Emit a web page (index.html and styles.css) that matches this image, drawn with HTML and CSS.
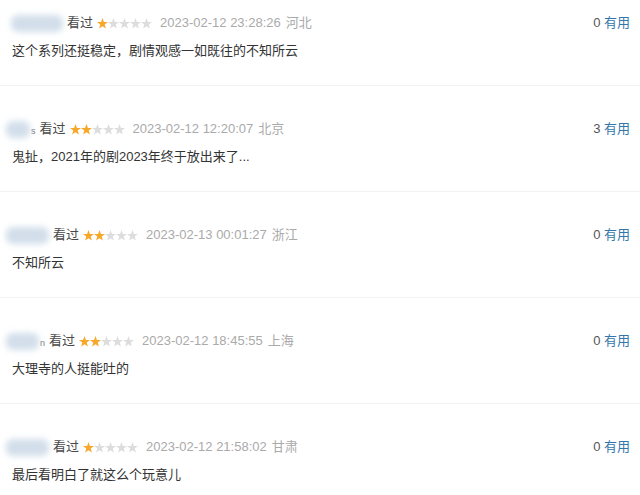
FILE: index.html
```html
<!DOCTYPE html>
<html lang="zh-CN">
<head>
    <meta charset="UTF-8">
    <meta name="viewport" content="width=device-width, initial-scale=1.0">
    <title>短评</title>
    <link rel="stylesheet" href="styles.css">
</head>
<body>
    <svg class="defs" width="0" height="0">
        <defs>
            <symbol id="star" viewBox="0 0 11 11">
                <polygon points="5.5,0 6.9,3.9 11,4 7.7,6.5 8.9,10.6 5.5,8.2 2.1,10.6 3.3,6.5 0,4 4.1,3.9"/>
            </symbol>
        </defs>
    </svg>
    <div class="comments">
        <div class="comment">
            <div class="comment-head">
                <div class="info">
                    <span class="name"><span class="blur blur-1"></span></span>
                    <span class="watched">看过</span>
                    <svg class="stars" viewBox="0 0 56 11">
                        <use href="#star" x="0" width="11" height="11" class="on"/>
                        <use href="#star" x="11" width="11" height="11"/>
                        <use href="#star" x="22" width="11" height="11"/>
                        <use href="#star" x="33" width="11" height="11"/>
                        <use href="#star" x="44" width="11" height="11"/>
                    </svg>
                    <span class="time">2023-02-12 23:28:26</span>
                    <span class="place">河北</span>
                </div>
                <div class="votes">0 <a href="#">有用</a></div>
            </div>
            <p class="comment-text">这个系列还挺稳定，剧情观感一如既往的不知所云</p>
        </div>
        <div class="comment">
            <div class="comment-head">
                <div class="info">
                    <span class="name"><span class="blur blur-2"></span><span class="tail">s</span></span>
                    <span class="watched">看过</span>
                    <svg class="stars" viewBox="0 0 56 11">
                        <use href="#star" x="0" width="11" height="11" class="on"/>
                        <use href="#star" x="11" width="11" height="11" class="on"/>
                        <use href="#star" x="22" width="11" height="11"/>
                        <use href="#star" x="33" width="11" height="11"/>
                        <use href="#star" x="44" width="11" height="11"/>
                    </svg>
                    <span class="time">2023-02-12 12:20:07</span>
                    <span class="place">北京</span>
                </div>
                <div class="votes">3 <a href="#">有用</a></div>
            </div>
            <p class="comment-text">鬼扯，2021年的剧2023年终于放出来了...</p>
        </div>
        <div class="comment">
            <div class="comment-head">
                <div class="info">
                    <span class="name"><span class="blur blur-3"></span></span>
                    <span class="watched">看过</span>
                    <svg class="stars" viewBox="0 0 56 11">
                        <use href="#star" x="0" width="11" height="11" class="on"/>
                        <use href="#star" x="11" width="11" height="11" class="on"/>
                        <use href="#star" x="22" width="11" height="11"/>
                        <use href="#star" x="33" width="11" height="11"/>
                        <use href="#star" x="44" width="11" height="11"/>
                    </svg>
                    <span class="time">2023-02-13 00:01:27</span>
                    <span class="place">浙江</span>
                </div>
                <div class="votes">0 <a href="#">有用</a></div>
            </div>
            <p class="comment-text">不知所云</p>
        </div>
        <div class="comment">
            <div class="comment-head">
                <div class="info">
                    <span class="name"><span class="blur blur-4"></span><span class="tail">n</span></span>
                    <span class="watched">看过</span>
                    <svg class="stars" viewBox="0 0 56 11">
                        <use href="#star" x="0" width="11" height="11" class="on"/>
                        <use href="#star" x="11" width="11" height="11" class="on"/>
                        <use href="#star" x="22" width="11" height="11"/>
                        <use href="#star" x="33" width="11" height="11"/>
                        <use href="#star" x="44" width="11" height="11"/>
                    </svg>
                    <span class="time">2023-02-12 18:45:55</span>
                    <span class="place">上海</span>
                </div>
                <div class="votes">0 <a href="#">有用</a></div>
            </div>
            <p class="comment-text">大理寺的人挺能吐的</p>
        </div>
        <div class="comment">
            <div class="comment-head">
                <div class="info">
                    <span class="name"><span class="blur blur-5"></span></span>
                    <span class="watched">看过</span>
                    <svg class="stars" viewBox="0 0 56 11">
                        <use href="#star" x="0" width="11" height="11" class="on"/>
                        <use href="#star" x="11" width="11" height="11"/>
                        <use href="#star" x="22" width="11" height="11"/>
                        <use href="#star" x="33" width="11" height="11"/>
                        <use href="#star" x="44" width="11" height="11"/>
                    </svg>
                    <span class="time">2023-02-12 21:58:02</span>
                    <span class="place">甘肃</span>
                </div>
                <div class="votes">0 <a href="#">有用</a></div>
            </div>
            <p class="comment-text">最后看明白了就这么个玩意儿</p>
        </div>
    </div>
</body>
</html>
```

FILE: styles.css
```css
body {
    margin: 0;
    padding: 0;
    background: #fff;
    color: #333;
    font-family: "Liberation Sans", "Noto Sans CJK SC", sans-serif;
    font-size: 13px;
}
.defs {
    position: absolute;
    width: 0;
    height: 0;
}
.comments {
    overflow: hidden;
}
.comment {
    padding: 33px 10px 24px 12px;
    border-bottom: 1px solid #f2f2f2;
}
.comment:first-child {
    padding-top: 13px;
}
.comment-head {
    display: flex;
    justify-content: space-between;
    align-items: center;
    height: 20px;
    line-height: 20px;
}
.info {
    display: flex;
    align-items: center;
}
.name {
    display: flex;
    align-items: center;
    margin-left: -6px;
    margin-right: 4px;
}
.blur {
    display: inline-block;
    height: 17px;
    background: #d2deea;
    border-radius: 7px;
    filter: blur(3px);
}
.blur-1 { width: 52px; margin-left: 5px; }
.blur-2 { width: 24px; }
.blur-3 { width: 43px; }
.blur-4 { width: 33px; }
.blur-5 { width: 43px; }
.tail {
    font-size: 9px;
    color: #777;
    margin-left: 1px;
    line-height: 1;
    padding-top: 5px;
}
.watched {
    color: #494949;
}
.stars {
    width: 56px;
    height: 11px;
    margin-left: 4px;
    margin-right: 7px;
    fill: #ddd;
}
.stars .on {
    fill: #f7a82a;
}
.time,
.place {
    color: #aaa;
}
.place {
    margin-left: 5px;
}
.votes {
    color: #555;
}
.votes a {
    color: #37a;
    text-decoration: none;
}
.comment-text {
    margin: 8px 0 0;
    line-height: 20px;
    color: #333;
}
```
